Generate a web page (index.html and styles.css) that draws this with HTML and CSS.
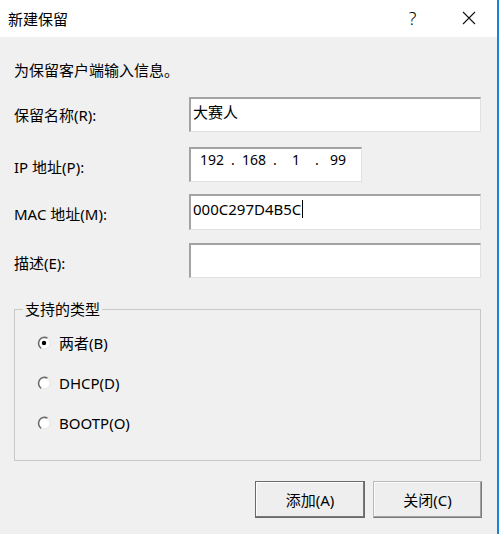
FILE: index.html
```html
<!DOCTYPE html>
<html lang="zh-CN">
<head>
<meta charset="utf-8">
<title>新建保留</title>
<link rel="stylesheet" href="styles.css">
</head>
<body>
<div class="dialog">
  <div class="titlebar">
    <div class="title">新建保留</div>
    <div class="tb-btn help">?</div>
    <div class="tb-btn close">
      <svg width="14" height="14" viewBox="0 0 14 14"><path d="M1 1 L13 13 M13 1 L1 13" stroke="#111" stroke-width="1.1" fill="none"/></svg>
    </div>
  </div>
  <div class="content">
    <p class="intro">为保留客户端输入信息。</p>
    <div class="form">
      <div class="row row-name">
        <div class="label">保留名称(R):</div>
        <div class="field">大赛人</div>
      </div>
      <div class="row row-ip">
        <div class="label">IP 地址(P):</div>
        <div class="field ip">
          <span class="oct">192</span><span class="dot">.</span><span class="oct">168</span><span class="dot">.</span><span class="oct">1</span><span class="dot">.</span><span class="oct">99</span>
        </div>
      </div>
      <div class="row row-mac">
        <div class="label">MAC 地址(M):</div>
        <div class="field">000C297D4B5C<span class="caret"></span></div>
      </div>
      <div class="row row-desc">
        <div class="label">描述(E):</div>
        <div class="field"></div>
      </div>
    </div>
    <fieldset class="group">
      <legend>支持的类型</legend>
      <div class="radio">
        <svg class="rb" width="14" height="14" viewBox="0 0 14 14"><circle cx="7" cy="7" r="6" fill="#fff" stroke="#e6e6e6" stroke-width="1"/><path d="M4.2 12.3 A6 6 0 0 1 10.5 2.1" stroke="#6e6e6e" stroke-width="1.6" fill="none"/><circle cx="7" cy="7" r="2.2" fill="#000"/></svg>
        <span>两者(B)</span>
      </div>
      <div class="radio">
        <svg class="rb" width="14" height="14" viewBox="0 0 14 14"><circle cx="7" cy="7" r="6" fill="#fff" stroke="#e6e6e6" stroke-width="1"/><path d="M4.2 12.3 A6 6 0 0 1 10.5 2.1" stroke="#6e6e6e" stroke-width="1.6" fill="none"/></svg>
        <span>DHCP(D)</span>
      </div>
      <div class="radio">
        <svg class="rb" width="14" height="14" viewBox="0 0 14 14"><circle cx="7" cy="7" r="6" fill="#fff" stroke="#e6e6e6" stroke-width="1"/><path d="M4.2 12.3 A6 6 0 0 1 10.5 2.1" stroke="#6e6e6e" stroke-width="1.6" fill="none"/></svg>
        <span>BOOTP(O)</span>
      </div>
    </fieldset>
    <div class="buttons">
      <div class="btn btn-default">添加(A)</div>
      <div class="btn">关闭(C)</div>
    </div>
  </div>
</div>
</body>
</html>
```
FILE: styles.css
```css
* { box-sizing: border-box; }
html, body { margin: 0; padding: 0; }
body {
  width: 499px;
  height: 534px;
  overflow: hidden;
  font-family: "Noto Sans", "Noto Sans CJK SC", sans-serif;
  font-size: 15px;
  color: #000;
  background: #f0f0f0;
}
.dialog {
  width: 499px;
  height: 534px;
  border-right: 2px solid #1883d7;
  background: #f0f0f0;
  display: flex;
  flex-direction: column;
}
.titlebar {
  flex: none;
  height: 37px;
  background: #fff;
  display: flex;
  align-items: center;
}
.title {
  flex: 1;
  padding-left: 8px;
  line-height: 20px;
}
.tb-btn {
  width: 56px;
  height: 37px;
  display: flex;
  align-items: center;
  justify-content: center;
}
.help {
  font-size: 18px;
  font-weight: 300;
  line-height: 20px;
  padding-bottom: 1px;
  padding-right: 1px;
}
.close { padding-bottom: 1px; }
.content {
  padding: 24px 16px 0 14px;
}
.intro {
  margin: 0 0 18px;
  line-height: 18px;
}
.form {
  display: flex;
  flex-direction: column;
}
.row {
  display: flex;
  align-items: center;
  height: 35px;
}
.row-ip { margin-top: 15px; }
.row-mac { margin-top: 12px; height: 36px; }
.row-desc { margin-top: 13px; }
.label {
  width: 175px;
  flex: none;
  line-height: 18px;
  padding-top: 4px;
}
.row-name .label { padding-top: 0; }
.field {
  flex: 1;
  height: 100%;
  background: #fff;
  border-style: solid;
  border-width: 2px 1px 1px 2px;
  border-color: #a3a3a3 #e1e1e1 #e1e1e1 #a3a3a3;
  padding: 4px 2px 0;
  line-height: 18px;
  white-space: nowrap;
  display: flex;
  align-items: flex-start;
}
.field.ip {
  flex: none;
  width: 173px;
  padding: 2px 0 0 5px;
  font-size: 14px;
}
.oct { width: 32px; text-align: center; }
.dot { width: 10px; text-align: center; }
.caret {
  display: inline-block;
  width: 1px;
  height: 18px;
  background: #000;
  margin-left: 1px;
}
.group {
  margin: 22px 0 0;
  border: 1px solid #c8c8c8;
  padding: 5px 0 17px 22px;
  min-width: 0;
}
.group legend {
  margin-left: -14px;
  padding: 0 2px;
  line-height: 18px;
}
.radio {
  height: 40px;
  display: flex;
  align-items: center;
  gap: 8px;
  line-height: 18px;
}
.rb { flex: none; }
.buttons {
  display: flex;
  justify-content: flex-end;
  gap: 8px;
  margin-top: 20px;
  margin-right: -1px;
}
.btn {
  width: 109px;
  height: 37px;
  display: flex;
  align-items: center;
  justify-content: center;
  background: #eeeeee;
  border: 1px solid #b9b9b9;
  border-right-color: #7a7a7a;
  border-bottom-color: #7a7a7a;
  box-shadow: inset -1px -1px 0 #a0a0a0, inset 1px 1px 0 #fafafa;
  line-height: 18px;
}
.btn-default {
  width: 110px;
  border-color: #6a6a6a;
  box-shadow: inset -1px -1px 0 #777, inset 1px 1px 0 #fdfdfd;
}
```
